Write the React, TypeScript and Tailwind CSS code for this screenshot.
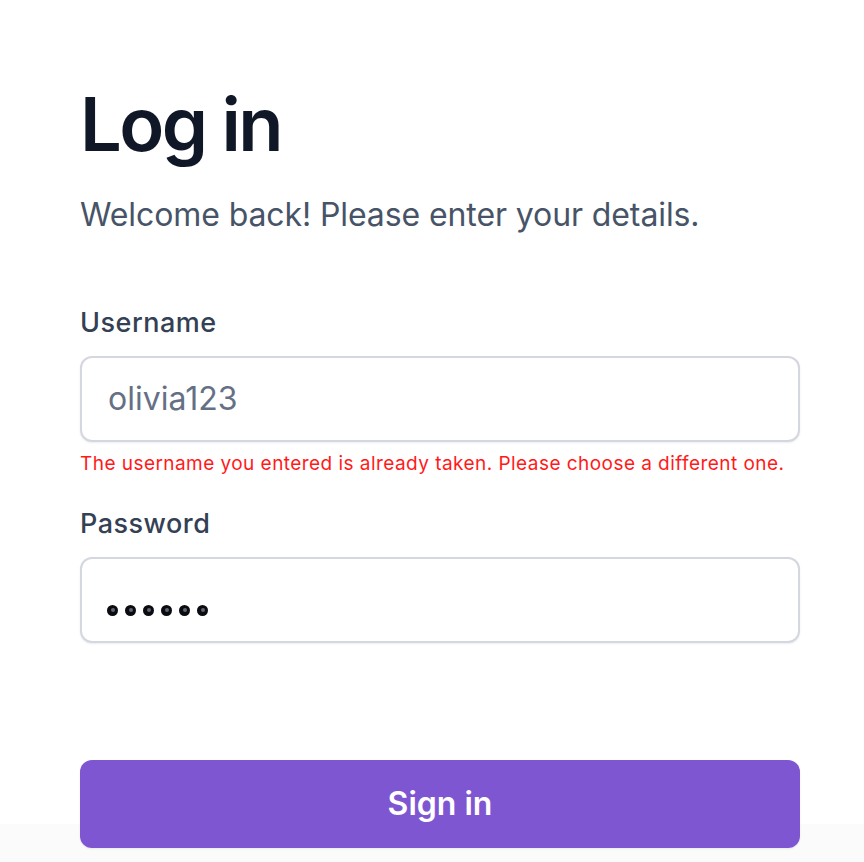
import React from 'react'

function Field({ label, children }: { label: string; children: React.ReactNode }) {
  return (
    <div className="flex flex-col">
      <label className="text-[27px] leading-[32px] font-medium tracking-[0.5px] text-[#344054]">{label}</label>
      <div className="mt-[17px] h-[86px] rounded-[12px] border-2 border-[#d5d7e0] bg-white shadow-[0_1px_2px_rgba(16,24,40,0.08)] flex items-center px-[26px]">
        {children}
      </div>
    </div>
  )
}

export default function App() {
  return (
    <div className="min-h-[862px] bg-[#fbfbfb] font-['Inter',sans-serif]">
      <div className="h-[824px] bg-white px-[80px] pt-[79px] w-[864px]">
        <div className="w-[720px] flex flex-col">
          <h1 className="text-[74px] leading-[90px] font-semibold tracking-[-0.035em] text-[#101828]">Log in</h1>
          <p className="mt-[26px] text-[32px] leading-[40px] tracking-[-0.1px] text-[#475467]">Welcome back! Please enter your details.</p>

          <div className="mt-[72px]">
            <Field label="Username">
              <span className="text-[32px] leading-[40px] text-[#667085]">olivia123</span>
            </Field>
            <p className="mt-[10px] text-[19px] leading-[24px] tracking-[0.45px] text-[#ff1a1a]">
              The username you entered is already taken. Please choose a different one.
            </p>
          </div>

          <div className="mt-[32px]">
            <Field label="Password">
              <div className="flex gap-[7px] mt-[20px] -ml-[1px]">
                {[...Array(6)].map((_, i) => (
                  <div key={i} className="w-[11px] h-[11px] rounded-full bg-[#0c0c10] flex items-center justify-center">
                    <div className="w-[4px] h-[4px] rounded-full bg-[#5f6675]" />
                  </div>
                ))}
              </div>
            </Field>
          </div>

          <button className="mt-[117px] h-[88px] rounded-[12px] bg-[#7f56d1] text-white text-[32px] font-semibold shadow-[0_1px_2px_rgba(16,24,40,0.08)]">
            Sign in
          </button>
        </div>
      </div>
    </div>
  )
}
